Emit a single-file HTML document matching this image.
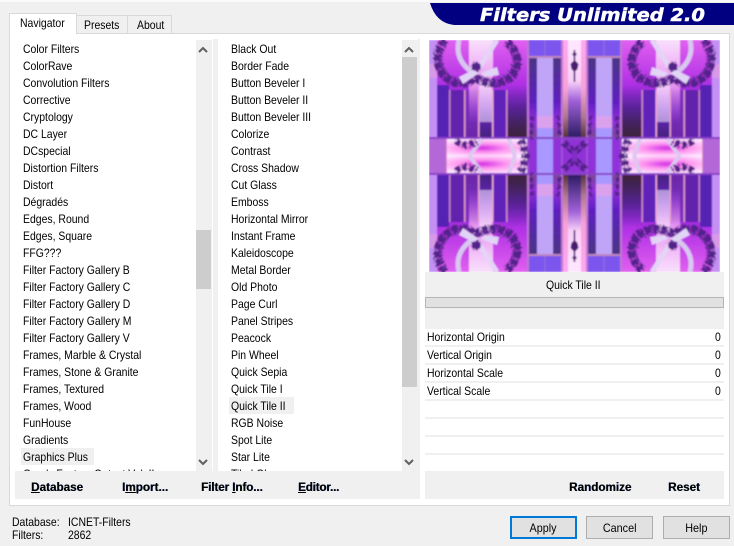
<!DOCTYPE html>
<html><head><meta charset="utf-8"><style>
html,body{margin:0;padding:0}
body{width:734px;height:546px;overflow:hidden;background:#f0f0f0;position:relative;font-family:"Liberation Sans",sans-serif;font-size:12px;color:#000}
div{position:absolute;box-sizing:border-box}
.t{white-space:nowrap;line-height:17px;height:17px;font-size:12px;transform:scaleX(.87);transform-origin:0 0}
.h{height:17px;background:#f0f0f0}
.b{font-weight:bold;font-size:11.7px;white-space:nowrap;line-height:16px;top:480px;color:#000;text-shadow:.4px 0 0 #1a3a7a}
.btn{top:516px;width:67px;height:23px;background:#e1e1e1;border:1px solid #adadad;text-align:center;line-height:22px}
.btn span{display:inline-block;font-size:12px;transform:scaleX(.9)}
.sep{left:425px;width:299px;height:2px;background:#f0f0f0}
</style></head><body>
<div style="left:0;top:0;width:734px;height:2px;background:#fafafa"></div>
<div style="left:9px;top:33px;width:721px;height:473px;background:#fff;border:1px solid #d9d9d9"></div>
<div style="left:9px;top:13px;width:68px;height:21px;background:#fff;border:1px solid #d9d9d9;border-bottom:0"></div>
<div style="left:76px;top:15px;width:52px;height:19px;background:#f0f0f0;border:1px solid #d9d9d9"></div>
<div style="left:127px;top:15px;width:45px;height:19px;background:#f0f0f0;border:1px solid #d9d9d9"></div>
<div class="t" style="left:20px;top:15px">Navigator</div>
<div class="t" style="left:84px;top:17px">Presets</div>
<div class="t" style="left:137px;top:17px">About</div>

<svg style="position:absolute;left:430px;top:3px" width="304" height="22"><path d="M0 0H304V22H24Q6 20 0 0Z" fill="#000080"/><text x="50" y="18" font-family="DejaVu Sans" font-weight="bold" font-style="italic" font-size="18" fill="#fff" stroke="#fff" stroke-width=".5" textLength="225" lengthAdjust="spacingAndGlyphs">Filters Unlimited 2.0</text></svg>

<div style="left:213px;top:39px;width:5px;height:432px;background:#f0f0f0"></div>
<div style="left:418px;top:39px;width:2px;height:460px;background:#f0f0f0"></div>
<div style="left:212px;top:471px;width:208px;height:28px;background:#f0f0f0"></div>

<div style="left:15px;top:40px;width:181px;height:431px;overflow:hidden">
<div class="h" style="left:6px;top:408px;width:73px"></div>
<div class="t" style="left:8px;top:1px">Color Filters</div>
<div class="t" style="left:8px;top:18px">ColorRave</div>
<div class="t" style="left:8px;top:35px">Convolution Filters</div>
<div class="t" style="left:8px;top:52px">Corrective</div>
<div class="t" style="left:8px;top:69px">Cryptology</div>
<div class="t" style="left:8px;top:86px">DC Layer</div>
<div class="t" style="left:8px;top:103px">DCspecial</div>
<div class="t" style="left:8px;top:120px">Distortion Filters</div>
<div class="t" style="left:8px;top:137px">Distort</div>
<div class="t" style="left:8px;top:154px">Dégradés</div>
<div class="t" style="left:8px;top:171px">Edges, Round</div>
<div class="t" style="left:8px;top:188px">Edges, Square</div>
<div class="t" style="left:8px;top:205px">FFG???</div>
<div class="t" style="left:8px;top:222px">Filter Factory Gallery B</div>
<div class="t" style="left:8px;top:239px">Filter Factory Gallery C</div>
<div class="t" style="left:8px;top:256px">Filter Factory Gallery D</div>
<div class="t" style="left:8px;top:273px">Filter Factory Gallery M</div>
<div class="t" style="left:8px;top:290px">Filter Factory Gallery V</div>
<div class="t" style="left:8px;top:307px">Frames, Marble &amp; Crystal</div>
<div class="t" style="left:8px;top:324px">Frames, Stone &amp; Granite</div>
<div class="t" style="left:8px;top:341px">Frames, Textured</div>
<div class="t" style="left:8px;top:358px">Frames, Wood</div>
<div class="t" style="left:8px;top:375px">FunHouse</div>
<div class="t" style="left:8px;top:392px">Gradients</div>
<div class="t" style="left:8px;top:409px">Graphics Plus</div>
<div class="t" style="left:8px;top:426px">Greg's Factory Output Vol. II</div>
</div>
<div style="left:196px;top:40px;width:16px;height:431px;background:#f0f0f0"></div>
<div style="left:196px;top:230px;width:15px;height:59px;background:#cdcdcd"></div>

<div style="left:218px;top:40px;width:184px;height:431px;overflow:hidden">
<div class="h" style="left:11px;top:357px;width:65px"></div>
<div class="t" style="left:13px;top:1px">Black Out</div>
<div class="t" style="left:13px;top:18px">Border Fade</div>
<div class="t" style="left:13px;top:35px">Button Beveler I</div>
<div class="t" style="left:13px;top:52px">Button Beveler II</div>
<div class="t" style="left:13px;top:69px">Button Beveler III</div>
<div class="t" style="left:13px;top:86px">Colorize</div>
<div class="t" style="left:13px;top:103px">Contrast</div>
<div class="t" style="left:13px;top:120px">Cross Shadow</div>
<div class="t" style="left:13px;top:137px">Cut Glass</div>
<div class="t" style="left:13px;top:154px">Emboss</div>
<div class="t" style="left:13px;top:171px">Horizontal Mirror</div>
<div class="t" style="left:13px;top:188px">Instant Frame</div>
<div class="t" style="left:13px;top:205px">Kaleidoscope</div>
<div class="t" style="left:13px;top:222px">Metal Border</div>
<div class="t" style="left:13px;top:239px">Old Photo</div>
<div class="t" style="left:13px;top:256px">Page Curl</div>
<div class="t" style="left:13px;top:273px">Panel Stripes</div>
<div class="t" style="left:13px;top:290px">Peacock</div>
<div class="t" style="left:13px;top:307px">Pin Wheel</div>
<div class="t" style="left:13px;top:324px">Quick Sepia</div>
<div class="t" style="left:13px;top:341px">Quick Tile I</div>
<div class="t" style="left:13px;top:358px">Quick Tile II</div>
<div class="t" style="left:13px;top:375px">RGB Noise</div>
<div class="t" style="left:13px;top:392px">Spot Lite</div>
<div class="t" style="left:13px;top:409px">Star Lite</div>
<div class="t" style="left:13px;top:426px">Tiled Glass</div>
</div>
<div style="left:402px;top:40px;width:16px;height:431px;background:#f0f0f0"></div>
<div style="left:402px;top:57px;width:15px;height:330px;background:#cdcdcd"></div>

<svg style="position:absolute;left:0;top:0" width="734" height="546" fill="none" stroke="#606060" stroke-width="2">
<path d="M199 52l4-4 4 4M199 460l4 4 4-4M405 52l4-4 4 4M405 460l4 4 4-4"/>
</svg>

<div style="left:15px;top:471px;width:405px;height:28px;background:#f0f0f0"></div>
<div class="b" style="left:31px"><u>D</u>atabase</div>
<div class="b" style="left:122px">I<u>m</u>port...</div>
<div class="b" style="left:201px;letter-spacing:-.1px">Filter <u>I</u>nfo...</div>
<div class="b" style="left:298px;letter-spacing:-.2px"><u>E</u>ditor...</div>

<svg style="position:absolute;left:429px;top:40px" width="291" height="232" viewBox="0 0 291 232">
<defs>
<filter id="soft" x="0" y="0" width="100%" height="100%"><feGaussianBlur stdDeviation=".7"/></filter>
<filter id="rough" x="-10%" y="-10%" width="120%" height="120%"><feTurbulence type="fractalNoise" baseFrequency=".5" numOctaves="2" seed="4" result="n"/><feDisplacementMap in="SourceGraphic" in2="n" scale="6"/></filter>
<linearGradient id="pv" x1="0" y1="0" x2="0" y2="1"><stop offset="0" stop-color="#e060f0"/><stop offset=".45" stop-color="#b030e4"/><stop offset=".72" stop-color="#6a24c4"/><stop offset="1" stop-color="#45207c"/></linearGradient>
<linearGradient id="pc" x1="0" y1="0" x2="0" y2="1"><stop offset="0" stop-color="#ffa8f4"/><stop offset=".5" stop-color="#f8a0d8"/><stop offset=".78" stop-color="#b07890"/><stop offset="1" stop-color="#503038"/></linearGradient>
<linearGradient id="pd" x1="0" y1="0" x2="0" y2="1"><stop offset="0" stop-color="#ffe8ff"/><stop offset=".42" stop-color="#f8d0f8"/><stop offset=".62" stop-color="#a060d8"/><stop offset="1" stop-color="#2a1a60"/></linearGradient>
<linearGradient id="wg" x1="0" y1="0" x2="0" y2="1"><stop offset="0" stop-color="#fff" stop-opacity=".8"/><stop offset=".55" stop-color="#ffc0f8" stop-opacity=".7"/><stop offset="1" stop-color="#e070ff" stop-opacity="0"/></linearGradient>
<linearGradient id="dk" x1="0" y1="0" x2="0" y2="1"><stop offset="0" stop-color="#4a3486"/><stop offset=".55" stop-color="#5f1ec0"/><stop offset=".8" stop-color="#9430dc"/><stop offset="1" stop-color="#7a4890"/></linearGradient>
<linearGradient id="br" x1="0" y1="0" x2="0" y2="1"><stop offset="0" stop-color="#3a1a70" stop-opacity="0"/><stop offset="1" stop-color="#3e2438"/></linearGradient>
<radialGradient id="mid" cx=".55" cy=".5" r=".55"><stop offset="0" stop-color="#d430e4"/><stop offset=".45" stop-color="#ff98f0"/><stop offset="1" stop-color="#fde8ff"/></radialGradient>
<g id="q">
<rect width="146" height="117" fill="#a050d8"/>
<rect x="0" y="0" width="98" height="98" fill="url(#pv)"/>
<rect x="0" y="0" width="8" height="98" fill="#c490f4"/>
<rect x="0" y="24" width="8" height="14" fill="#e8a0e0" opacity=".6"/>
<rect x="8" y="45" width="12" height="53" fill="#5524b4"/>
<rect x="21" y="50" width="14" height="48" fill="#6424ac"/>
<rect x="36" y="50" width="13" height="48" fill="#7a2cb8" opacity=".7"/>
<rect x="64" y="50" width="13" height="48" fill="#6024b8"/>
<rect x="78" y="45" width="20" height="53" fill="url(#br)"/>
<rect x="40" y="0" width="24" height="84" fill="url(#wg)"/>
<rect x="50" y="42" width="13" height="40" fill="#fff" opacity=".5"/>
<rect x="20" y="50" width="1.5" height="48" fill="#c880c0"/>
<rect x="35" y="50" width="1.5" height="48" fill="#e098c8"/>
<rect x="49" y="50" width="1.5" height="48" fill="#e8a0d0"/>
<rect x="63" y="50" width="1.5" height="48" fill="#f0a8d0"/>
<rect x="77" y="50" width="1.5" height="48" fill="#d088c8"/>
<path d="M30 0C26 16 34 26 44 33" stroke="#d8c8f0" stroke-width="5" fill="none"/>
<path d="M68 0L50 28" stroke="#e4d4f6" stroke-width="5" fill="none"/>
<g filter="url(#rough)" fill="none">
<path d="M16 0C8 10 6 24 14 34C22 44 34 46 46 38C58 44 74 46 84 34C92 22 88 12 78 2" stroke="#52248a" stroke-width="9" stroke-dasharray="7 1"/>
<path d="M16 4C10 12 10 24 18 32C26 40 36 42 46 36C58 42 70 42 80 32C86 24 84 14 78 6" stroke="#7a38b0" stroke-width="2.500" stroke-dasharray="2 5"/>
<circle cx="47" cy="27" r="5" fill="#52248a"/>
</g>
<path d="M50 33L34 44L30 37L44 30ZM52 33L68 27L70 35L56 37Z" fill="#e2d4f6"/>
<rect x="100" y="0" width="32" height="16" fill="#7b55ee"/>
<rect x="115.500" y="0" width="1" height="16" fill="#9a70d8"/>
<rect x="98" y="0" width="2" height="98" fill="#c078d0"/>
<rect x="132" y="0" width="2" height="98" fill="#c078d0"/>
<rect x="100" y="16" width="32" height="2" fill="#c088c0"/>
<rect x="100" y="18" width="32" height="80" fill="url(#dk)"/>
<rect x="108" y="18" width="16" height="99" fill="#c0a4f8"/>
<rect x="108" y="76" width="16" height="12" fill="#e8a0e8" opacity=".7"/>
<rect x="108" y="88" width="16" height="29" fill="#a898ff"/>
<rect x="100" y="98" width="8" height="19" fill="#9030d8"/>
<rect x="124" y="98" width="8" height="19" fill="#9030d8"/>
<rect x="134" y="0" width="12" height="98" fill="url(#pc)"/>
<rect x="139" y="0" width="7" height="98" fill="url(#pd)"/>
<path d="M145.500 10V42" stroke="#4a1f70" stroke-width="1.500"/>
<path d="M145.500 20l-4 4 1 5 3 3zM145.500 12l-2.500 2 2.500 3z" fill="#4a1f70"/>
<rect x="0" y="97" width="134" height="2" fill="#8a40c8"/>
<rect x="134" y="97" width="12" height="3" fill="#8a40c8"/>
<rect x="0" y="99" width="98" height="18" fill="url(#mid)"/>
<rect x="0" y="99" width="17" height="18" fill="#b468d8"/>
<rect x="17" y="99" width="1" height="18" fill="#e090c8"/>
<rect x="134" y="100" width="12" height="17" fill="#9030d8"/>
<path d="M53 99L40 117M80 99L86 117" stroke="#dcc8f0" stroke-width="4"/>
<g filter="url(#rough)" fill="none" stroke="#52248a" stroke-dasharray="5 2">
<path d="M27 101C34 106 40 106 48 102" stroke-width="7"/>
<path d="M92 100L97 117" stroke-width="8"/>
<path d="M103 76L102 100M129 76L131 96" stroke-width="3.500"/>
<path d="M135 103L146 113" stroke-width="7"/>
</g>
</g>
</defs>
<g filter="url(#soft)">
<use href="#q"/>
<use href="#q" transform="translate(291 0) scale(-1 1)"/>
<use href="#q" transform="translate(0 232) scale(1 -1)"/>
<use href="#q" transform="translate(291 232) scale(-1 -1)"/>
</g>
</svg>

<div style="left:425px;top:272px;width:299px;height:57px;background:#f0f0f0"></div>
<div class="t" style="left:546px;top:277px">Quick Tile II</div>
<div style="left:425px;top:297px;width:299px;height:11px;background:#e1e1e1;border:1px solid #b5b5b5"></div>

<div class="sep" style="top:345px"></div>
<div class="sep" style="top:363px"></div>
<div class="sep" style="top:381px"></div>
<div class="sep" style="top:399px"></div>
<div class="sep" style="top:417px"></div>
<div class="sep" style="top:435px"></div>
<div class="sep" style="top:453px"></div>
<div class="t" style="left:427px;top:329px">Horizontal Origin</div>
<div class="t" style="left:427px;top:347px">Vertical Origin</div>
<div class="t" style="left:427px;top:365px">Horizontal Scale</div>
<div class="t" style="left:427px;top:383px">Vertical Scale</div>
<div class="t" style="left:715px;top:329px">0</div>
<div class="t" style="left:715px;top:347px">0</div>
<div class="t" style="left:715px;top:365px">0</div>
<div class="t" style="left:715px;top:383px">0</div>

<div style="left:425px;top:471px;width:299px;height:28px;background:#f0f0f0"></div>
<div class="b" style="left:569px">Randomize</div>
<div class="b" style="left:668px">Reset</div>

<div class="t" style="left:12px;top:514px">Database:</div>
<div class="t" style="left:68px;top:514px">ICNET-Filters</div>
<div class="t" style="left:12px;top:527px">Filters:</div>
<div class="t" style="left:68px;top:527px">2862</div>

<div class="btn" style="left:510px;border:2px solid #0078d7;line-height:20px"><span>Apply</span></div>
<div class="btn" style="left:586px"><span>Cancel</span></div>
<div class="btn" style="left:663px"><span>Help</span></div>
</body></html>
